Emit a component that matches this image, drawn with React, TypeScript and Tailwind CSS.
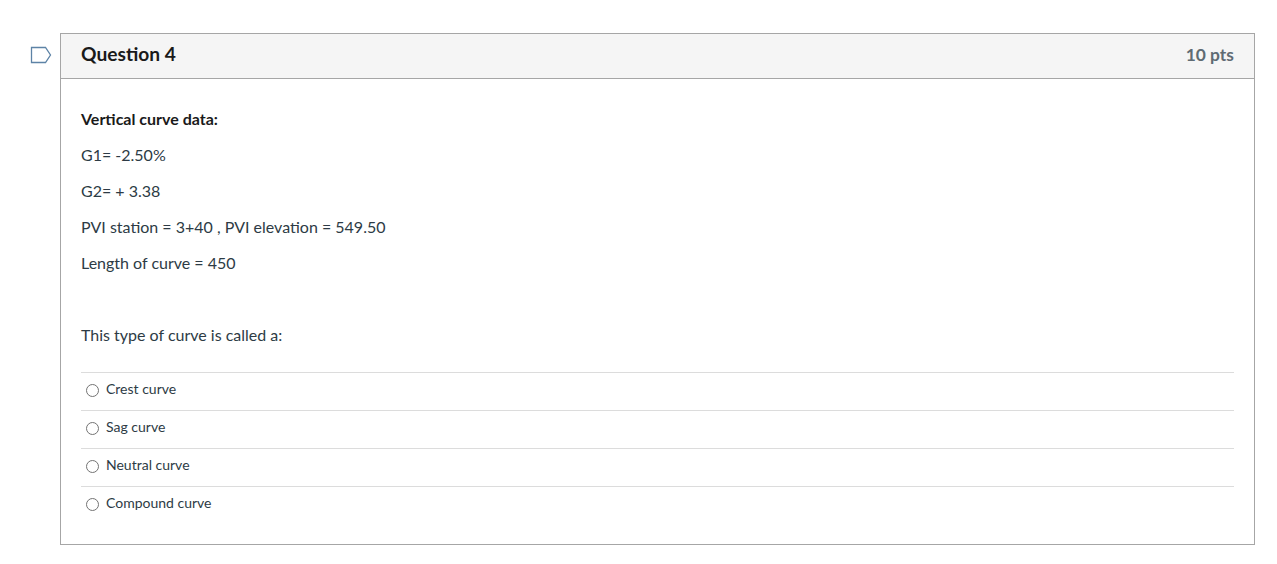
const options = ["Crest curve", "Sag curve", "Neutral curve", "Compound curve"];

export default function App() {
  return (
    <div className="min-h-[564px] bg-white pt-[33px] pl-[30px] font-['Lato','sans-serif'] text-[#2d3b45]">
      <div className="flex items-start gap-[8px]">
        <svg className="mt-[13px] shrink-0" width="22" height="18" viewBox="0 0 22 18" fill="none">
          <path d="M1.5 1.5H15.5L20.5 9L15.5 16.5H1.5Z" fill="#fff" stroke="#5d83a6" strokeWidth="1.3" />
        </svg>
        <div className="h-[512px] w-[1195px] border border-[#a6a6a6]">
          <div className="flex h-[45px] items-center justify-between border-b border-[#a6a6a6] bg-[#f5f5f5] px-[20px] pb-[3px]">
            <span className="text-[19.2px] font-bold text-[#1a1a1a]">Question 4</span>
            <span className="mt-[2px] text-[17.4px] font-bold text-[#5f6b73]">10 pts</span>
          </div>
          <div className="px-[20px] pt-[28px] text-[16px] leading-[24px] text-[#2d3b45]">
            <p className="font-bold text-[#1a1a1a]">Vertical curve data:</p>
            <p className="mt-[12px]">G1= -2.50%</p>
            <p className="mt-[12px]">G2= + 3.38</p>
            <p className="mt-[12px]">PVI station = 3+40 , PVI elevation = 549.50</p>
            <p className="mt-[12px]">Length of curve = 450</p>
            <p className="mt-[48px]">This type of curve is called a:</p>
            <div className="mt-[25px]">
              {options.map((o) => (
                <div key={o} className="flex h-[38px] items-center gap-[7px] border-t border-[#dcdcdc] pb-[6px] pl-[5px] text-[14px]">
                  <span className="mt-[4px] h-[13px] w-[13px] rounded-full border border-[#737373] bg-white" />
                  <span>{o}</span>
                </div>
              ))}
            </div>
          </div>
        </div>
      </div>
    </div>
  );
}
